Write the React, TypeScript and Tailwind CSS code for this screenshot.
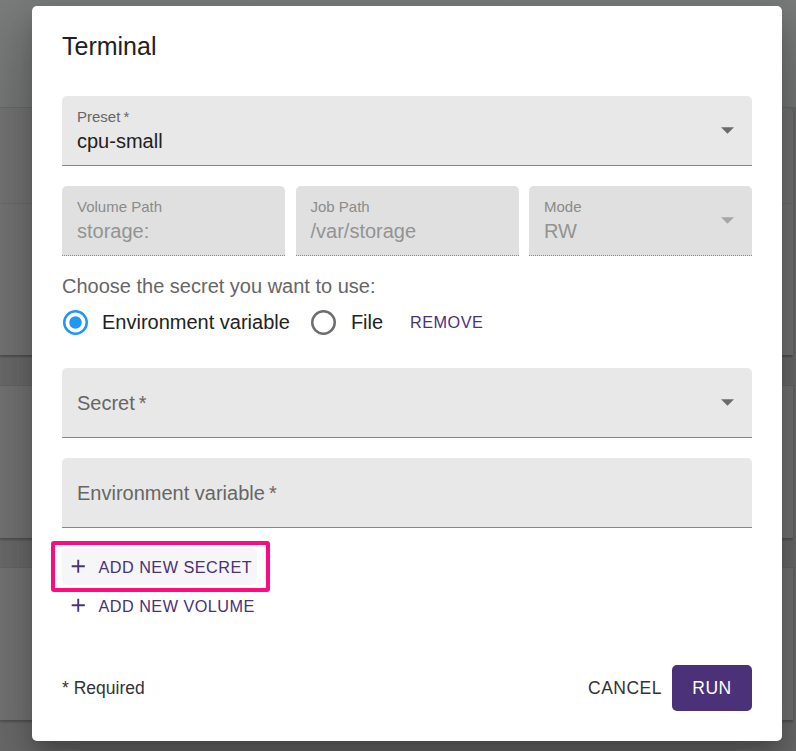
import React from "react";

function Arrow({ color }: { color: string }) {
  return (
    <svg width="13" height="7" viewBox="0 0 12.5 6.25" className="shrink-0">
      <path d="M0 0H12.5L6.25 6.25Z" fill={color} />
    </svg>
  );
}

function Plus() {
  return (
    <svg width="22.5" height="22.5" viewBox="0 0 24 24" className="shrink-0">
      <path d="M19 13h-6v6h-2v-6H5v-2h6V5h2v6h6v2z" fill="#4a3178" />
    </svg>
  );
}

function RadioChecked() {
  return (
    <svg width="25" height="25" viewBox="0 0 25 25" className="shrink-0">
      <circle cx="12.5" cy="12.5" r="11.25" fill="none" stroke="#2196f3" strokeWidth="2.5" />
      <circle cx="12.5" cy="12.5" r="6.25" fill="#2196f3" />
    </svg>
  );
}

function RadioEmpty() {
  return (
    <svg width="25" height="25" viewBox="0 0 25 25" className="shrink-0">
      <circle cx="12.5" cy="12.5" r="11.25" fill="none" stroke="#6e6e6e" strokeWidth="2.5" />
    </svg>
  );
}

function DisabledField({ label, value, arrow }: { label: string; value: string; arrow?: boolean }) {
  return (
    <div className="h-[70px] flex items-center bg-[#e0e0e0] rounded-t-[5px] border-b border-dotted border-[#8a8a8a] pr-[18px]">
      <div className="flex-1 flex flex-col pl-[15px] h-full">
        <div className="pt-[10px] text-[15px] leading-[21px] text-[#8b8b8b]">{label}</div>
        <div className="text-[20px] leading-[28px] text-[#939393]">{value}</div>
      </div>
      {arrow && <Arrow color="#a6a6a6" />}
    </div>
  );
}

export default function App() {
  return (
    <div className="relative w-[796px] h-[751px] overflow-hidden font-['Liberation_Sans',Arial,sans-serif]">
      {/* dimmed page behind */}
      <div className="flex flex-col h-full bg-[#686868]">
        <div className="h-[107px] shrink-0 bg-gradient-to-b from-[#7a7c7c] to-[#737575]" />
        <div className="mr-[3px] h-[248px] shrink-0 bg-[#717171] border-t border-[#666] rounded-tr-[5px] flex flex-col shadow-[0_2px_2px_rgba(0,0,0,0.25)]">
          <div className="h-[96px] border-b border-[#686868]" />
        </div>
        <div className="h-[31px] shrink-0 border-b border-[#646464]" />
        <div className="mr-[3px] h-[152px] shrink-0 bg-[#717171] shadow-[0_2px_2px_rgba(0,0,0,0.25)]" />
        <div className="h-[30px] shrink-0 border-b border-[#646464]" />
        <div className="mr-[3px] h-[152px] shrink-0 bg-[#717171] shadow-[0_2px_2px_rgba(0,0,0,0.25)]" />
      </div>

      {/* dialog */}
      <div className="absolute left-[32px] top-[6px] w-[750px] bg-white rounded-[5px] px-[30px] pt-[20px] pb-[30px] flex flex-col shadow-[0_11px_15px_-7px_rgba(0,0,0,0.2),0_24px_38px_3px_rgba(0,0,0,0.14),0_9px_46px_8px_rgba(0,0,0,0.12)]">
        <div className="text-[25px] leading-[40px] text-[#212121]">Terminal</div>

        <div className="mt-[30px] h-[70px] flex items-center bg-[#e8e8e8] rounded-t-[5px] border-b border-[#878787] pr-[18px]">
          <div className="flex-1 flex flex-col pl-[15px] h-full">
            <div className="pt-[10px] text-[15px] leading-[21px] text-[#666]">Preset{"\u2009"}*</div>
            <div className="text-[20px] leading-[28px] text-[#212121]">cpu-small</div>
          </div>
          <Arrow color="#6b6b6b" />
        </div>

        <div className="mt-[20px] grid grid-cols-3 gap-[10.5px]">
          <DisabledField label="Volume Path" value="storage:" />
          <DisabledField label="Job Path" value="/var/storage" />
          <DisabledField label="Mode" value="RW" arrow />
        </div>

        <div className="mt-[18px] text-[20px] leading-[24px] text-[#666]">Choose the secret you want to use:</div>

        <div className="mt-[9px] h-[30px] flex items-center text-[20px] leading-[24px] text-[#222]">
          <div className="ml-[1px]">
            <RadioChecked />
          </div>
          <span className="ml-[14px]">Environment variable</span>
          <div className="ml-[21px]">
            <RadioEmpty />
          </div>
          <span className="ml-[15px]">File</span>
          <span className="ml-[27px] text-[16.25px] tracking-[0.46px] text-[#4a3178]">REMOVE</span>
        </div>

        <div className="mt-[31px] h-[70px] flex items-center bg-[#e8e8e8] rounded-t-[5px] border-b border-[#878787] pl-[15px] pr-[18px]">
          <div className="flex-1 text-[20px] leading-[28px] text-[#666]">Secret{"\u2009"}*</div>
          <Arrow color="#6b6b6b" />
        </div>

        <div className="mt-[20px] h-[70px] flex items-center bg-[#e8e8e8] rounded-t-[5px] border-b border-[#878787] pl-[15px]">
          <div className="flex-1 text-[20px] leading-[28px] text-[#666]">Environment variable{"\u2009"}*</div>
        </div>

        <div className="mt-[20px] relative self-start h-[37px] pl-[5px] pr-[5px] flex items-center rounded-[5px] bg-[#f6f5f8] text-[16.25px] leading-[28px] tracking-[0.46px] text-[#4a3178]">
          <Plus />
          <span className="ml-[9px]">ADD NEW SECRET</span>
          <div className="absolute -top-[7px] -left-[11px] -right-[13px] -bottom-[7px] border-[4px] border-[#ff0a80] rounded-[3px]" />
        </div>

        <div className="mt-[2px] self-start h-[37px] pl-[5px] pr-[5px] flex items-center rounded-[5px] text-[16.25px] leading-[28px] tracking-[0.46px] text-[#4a3178]">
          <Plus />
          <span className="ml-[9px]">ADD NEW VOLUME</span>
        </div>

        <div className="mt-[41px] flex items-center justify-between">
          <span className="text-[17.5px] leading-[24px] text-[#333]">* Required</span>
          <div className="flex items-center">
            <span className="text-[17.5px] leading-[30px] tracking-[0.5px] text-[#333]">CANCEL</span>
            <div className="ml-[10px] w-[80px] h-[45.6px] flex items-center justify-center rounded-[5px] bg-[#4a3178] text-white text-[17.5px] tracking-[0.5px]">
              RUN
            </div>
          </div>
        </div>
      </div>
    </div>
  );
}
